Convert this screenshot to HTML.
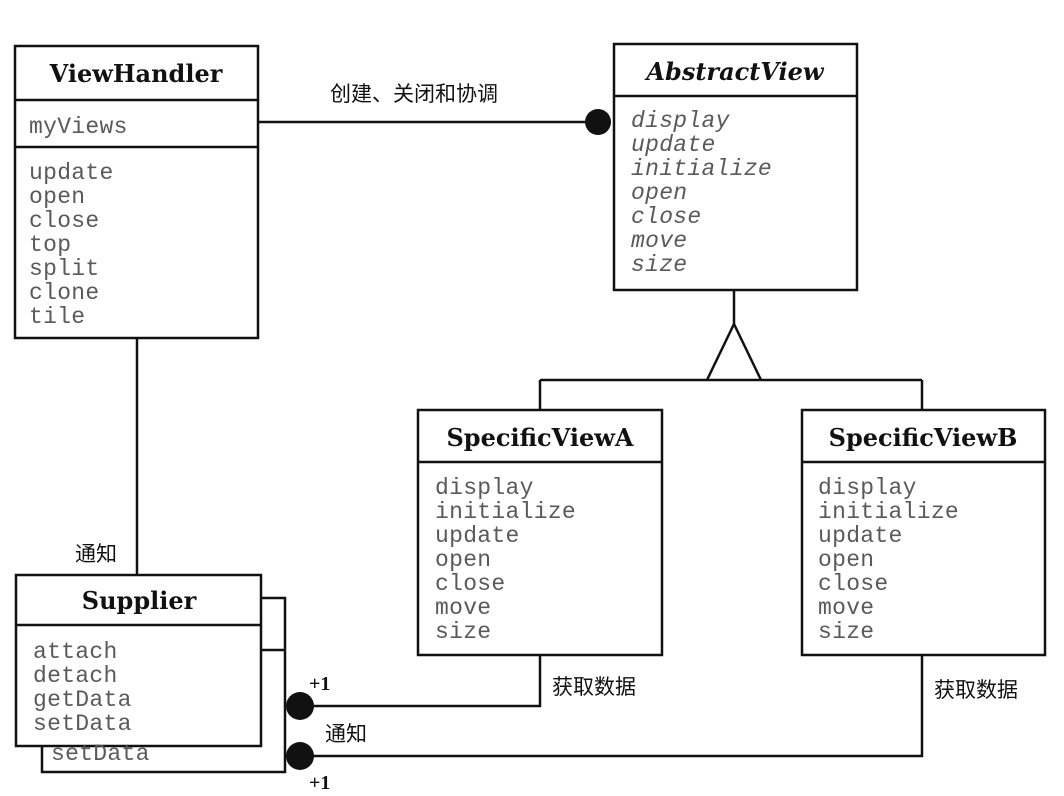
<!DOCTYPE html>
<html><head><meta charset="utf-8"><style>
html,body{margin:0;padding:0;background:#fff;}
svg{display:block}
.t{font-family:"DejaVu Serif","Liberation Serif",serif;font-weight:bold;font-size:24px;fill:#111;text-anchor:middle}
.m{font-family:"Liberation Mono",monospace;font-size:23px;fill:#5a5a5a;letter-spacing:0.3px}
.i{font-style:italic}
.c{font-family:"Liberation Sans","Noto Sans CJK SC",sans-serif;font-size:21px;fill:#111}
.p{font-family:"Liberation Serif",serif;font-weight:bold;font-size:20px;fill:#111}
</style></head><body>
<svg width="1064" height="796" viewBox="0 0 1064 796" xmlns="http://www.w3.org/2000/svg">
<g fill="none" stroke="#111" stroke-width="2.5">
<rect x="15" y="46" width="243" height="292"/>
<line x1="15" y1="100" x2="258" y2="100"/>
<line x1="15" y1="147" x2="258" y2="147"/>
<line x1="258" y1="122" x2="597" y2="122"/>
<line x1="137" y1="338" x2="137" y2="575"/>
<rect x="614" y="44" width="243" height="246"/>
<line x1="614" y1="96" x2="857" y2="96"/>
<line x1="734" y1="290" x2="734" y2="324"/>
<polyline points="707,380 734,324 761,380"/>
<line x1="540" y1="380" x2="922" y2="380"/>
<line x1="540" y1="380" x2="540" y2="410"/>
<line x1="922" y1="380" x2="922" y2="410"/>
<rect x="418" y="410" width="244" height="245"/>
<line x1="418" y1="462" x2="662" y2="462"/>
<rect x="802" y="410" width="243" height="245"/>
<line x1="802" y1="462" x2="1045" y2="462"/>
<polyline points="261,598 285,598 285,772 42,772 42,746"/>
<line x1="261" y1="650" x2="285" y2="650"/>
<rect x="16" y="575" width="245" height="171" fill="#fff"/>
<line x1="16" y1="625" x2="261" y2="625"/>
<polyline points="300,706 540,706 540,655"/>
<polyline points="300,756 922,756 922,655"/>
</g>
<g fill="#111">
<circle cx="598" cy="122" r="13"/>
<circle cx="300" cy="706" r="14"/>
<circle cx="300" cy="756" r="14"/>
</g>
<text class="t" x="136" y="82">ViewHandler</text>
<text class="m" x="29" y="133">myViews</text>
<text class="m" x="29" y="179">update</text>
<text class="m" x="29" y="203">open</text>
<text class="m" x="29" y="227">close</text>
<text class="m" x="29" y="251">top</text>
<text class="m" x="29" y="275">split</text>
<text class="m" x="29" y="299">clone</text>
<text class="m" x="29" y="323">tile</text>
<text class="c" x="330" y="101">创建、关闭和协调</text>
<text class="t i" x="735" y="80">AbstractView</text>
<text class="m i" x="631" y="127">display</text>
<text class="m i" x="631" y="151">update</text>
<text class="m i" x="631" y="175">initialize</text>
<text class="m i" x="631" y="199">open</text>
<text class="m i" x="631" y="223">close</text>
<text class="m i" x="631" y="247">move</text>
<text class="m i" x="631" y="271">size</text>
<text class="t" x="540" y="446">SpecificViewA</text>
<text class="m" x="435" y="494">display</text>
<text class="m" x="435" y="518">initialize</text>
<text class="m" x="435" y="542">update</text>
<text class="m" x="435" y="566">open</text>
<text class="m" x="435" y="590">close</text>
<text class="m" x="435" y="614">move</text>
<text class="m" x="435" y="638">size</text>
<text class="t" x="923" y="446">SpecificViewB</text>
<text class="m" x="818" y="494">display</text>
<text class="m" x="818" y="518">initialize</text>
<text class="m" x="818" y="542">update</text>
<text class="m" x="818" y="566">open</text>
<text class="m" x="818" y="590">close</text>
<text class="m" x="818" y="614">move</text>
<text class="m" x="818" y="638">size</text>
<text class="c" x="75" y="561">通知</text>
<text class="t" x="139" y="609">Supplier</text>
<text class="m" x="33" y="658">attach</text>
<text class="m" x="33" y="682">detach</text>
<text class="m" x="33" y="706">getData</text>
<text class="m" x="33" y="730">setData</text>
<text class="m" x="51" y="760">setData</text>
<text class="p" x="309" y="690">+1</text>
<text class="c" x="325" y="741">通知</text>
<text class="p" x="309" y="789">+1</text>
<text class="c" x="552" y="694">获取数据</text>
<text class="c" x="934" y="697">获取数据</text>
</svg>
</body></html>
